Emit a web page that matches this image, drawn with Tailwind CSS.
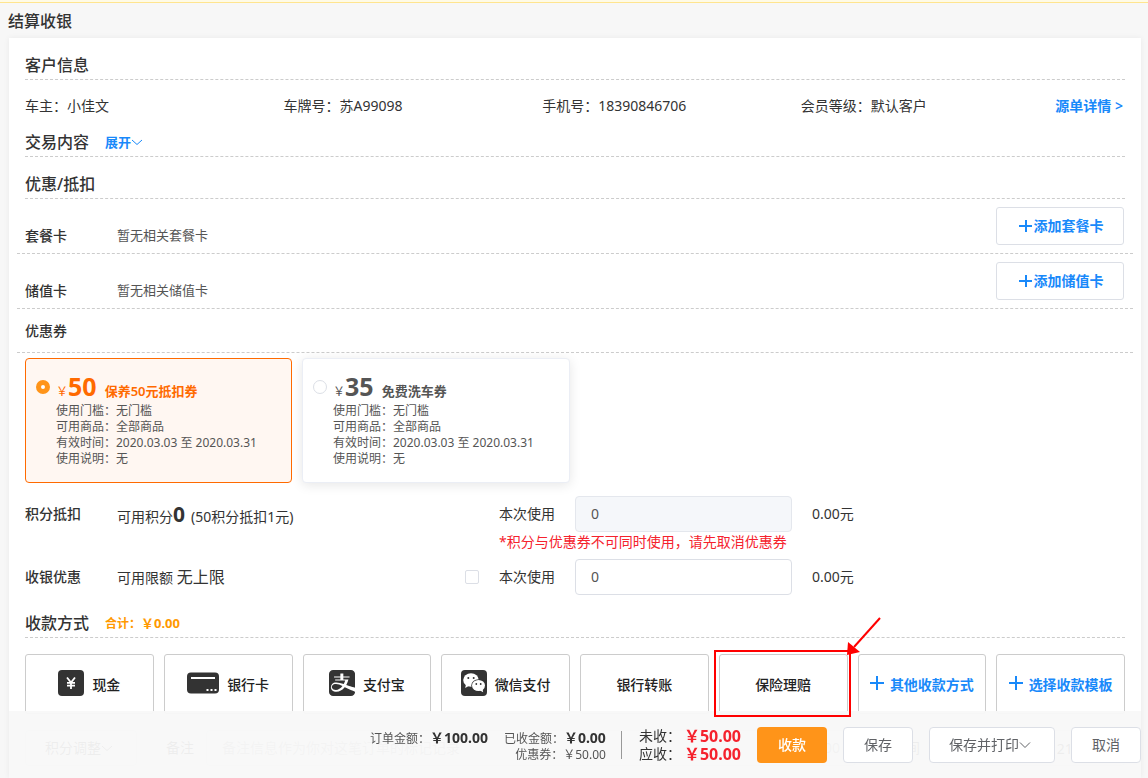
<!DOCTYPE html>
<html lang="zh-CN">
<head>
<meta charset="utf-8">
<meta name="viewport" content="width=device-width, initial-scale=1">
<title>结算收银</title>
<script src="https://cdn.jsdelivr.net/npm/@tailwindcss/browser@4"></script>
</head>
<body class="h-screen overflow-hidden bg-[#f7f7f7] font-['Noto_Sans','Noto_Sans_CJK_SC',sans-serif] text-sm leading-5 text-[#333]">
<div class="h-[3px] border-b border-[#ffe58f] bg-[#fffbe6]"></div>
<h1 class="flex h-[35px] items-center pl-2 text-base font-medium leading-6">结算收银</h1>

<main class="ml-[9px] mr-[7px] bg-white px-4 pb-3 shadow-[0_0_6px_rgba(0,0,0,0.06)]">
  <h2 class="flex h-[42px] items-end border-b border-dashed border-[#ccc] pb-[2px] text-base font-medium leading-6">客户信息</h2>
  <div class="flex h-[50px] items-center pt-px">
    <div class="grid flex-1 grid-cols-4 whitespace-nowrap">
      <div>车主：小佳文</div>
      <div>车牌号：苏A99098</div>
      <div>手机号：18390846706</div>
      <div>会员等级：默认客户</div>
    </div>
    <a href="#" class="-ml-1 mr-0.5 whitespace-nowrap font-semibold text-[#1989fa]">源单详情 &gt;</a>
  </div>

  <div class="flex items-end gap-4 border-b border-dashed border-[#ccc] pb-[2px]">
    <h2 class="text-base font-medium leading-6">交易内容</h2>
    <button class="flex h-6 items-center text-[13px] font-semibold text-[#1989fa]">展开
      <svg class="size-3" viewBox="0 0 12 12" fill="none" stroke="currentColor"><path d="M1 4l5 4.500 5-4.500"/></svg>
    </button>
  </div>

  <h2 class="mt-[15px] border-b border-dashed border-[#ccc] pb-[2px] text-base font-medium leading-6">优惠/抵扣</h2>

  <div class="-mx-2 flex h-[55px] items-start border-b border-dashed border-[#ccc] pl-2 pr-[9px]">
    <h3 class="mt-[27px] w-[92px] font-medium">套餐卡</h3>
    <p class="mt-[26px] flex-1 text-[13px] text-[#555]">暂无相关套餐卡</p>
    <button class="mt-2 flex h-[38px] w-32 items-center justify-center rounded-[3px] border border-[#dcdfe6] bg-white pl-0.5 font-semibold text-[#1989fa]">
      <svg class="mr-0.5 size-[13px]" viewBox="0 0 13 13" fill="none" stroke="currentColor" stroke-width="2"><path d="M0 6h13M7 0v12"/></svg>添加套餐卡
    </button>
  </div>
  <div class="-mx-2 flex h-[55px] items-start border-b border-dashed border-[#ccc] pl-2 pr-[9px]">
    <h3 class="mt-[27px] w-[92px] font-medium">储值卡</h3>
    <p class="mt-[26px] flex-1 text-[13px] text-[#555]">暂无相关储值卡</p>
    <button class="mt-2 flex h-[38px] w-32 items-center justify-center rounded-[3px] border border-[#dcdfe6] bg-white pl-0.5 font-semibold text-[#1989fa]">
      <svg class="mr-0.5 size-[13px]" viewBox="0 0 13 13" fill="none" stroke="currentColor" stroke-width="2"><path d="M0 6h13M7 0v12"/></svg>添加储值卡
    </button>
  </div>
  <div class="-mx-2 flex h-11 items-center border-b border-dashed border-[#ccc] px-2">
    <h3 class="font-medium">优惠券</h3>
  </div>

  <div class="mt-[5px] flex gap-2.5">
    <label class="flex h-[125px] w-[267px] gap-1.5 rounded border border-[#ff6a00] bg-[#fff7f2] pl-2.5 pt-[11px] text-xs leading-4 text-[#555]">
      <input type="radio" name="coupon" checked class="mt-2.5 size-3.5 shrink-0 appearance-none rounded-full border-[5px] border-[#ff9419] bg-white">
      <span class="block">
        <span class="flex h-[33px] items-baseline leading-8 text-[#ff6a00]"><span>￥</span><b class="text-[25px] leading-8">50</b><span class="ml-2 text-[13px] font-semibold">保养50元抵扣券</span></span>
        <span class="block">使用门槛：无门槛</span>
        <span class="block">可用商品：全部商品</span>
        <span class="block">有效时间：2020.03.03 至 2020.03.31</span>
        <span class="block">使用说明：无</span>
      </span>
    </label>
    <label class="flex h-[125px] w-[268px] gap-1.5 rounded border border-[#ebeef5] bg-white pl-2.5 pt-[11px] text-xs leading-4 text-[#555] shadow-[0_2px_12px_rgba(0,0,0,0.1)]">
      <input type="radio" name="coupon" class="mt-2.5 size-3.5 shrink-0 appearance-none rounded-full border border-[#dcdfe6] bg-white">
      <span class="block">
        <span class="flex h-[33px] items-baseline leading-8"><span>￥</span><b class="text-[25px] leading-8">35</b><span class="ml-2 text-[13px] font-semibold">免费洗车券</span></span>
        <span class="block">使用门槛：无门槛</span>
        <span class="block">可用商品：全部商品</span>
        <span class="block">有效时间：2020.03.03 至 2020.03.31</span>
        <span class="block">使用说明：无</span>
      </span>
    </label>
  </div>

  <div class="mt-[13px] flex h-[63px] items-start">
    <h3 class="flex h-9 w-[92px] items-center font-medium">积分抵扣</h3>
    <p class="flex h-9 w-[382px] items-baseline leading-9">可用积分<b class="text-[21px] leading-9">0</b><span class="ml-1.5">(50积分抵扣1元)</span></p>
    <div>
      <div class="flex h-9 items-center">
        <label for="points" class="w-[76px]">本次使用</label>
        <input id="points" value="0" disabled class="h-9 w-[217px] rounded border border-[#e4e7ed] bg-[#f5f7fa] px-[15px] pb-0.5 text-[#555]">
        <span class="ml-5">0.00元</span>
      </div>
      <p class="text-[#f5222d]">*积分与优惠券不可同时使用，请先取消优惠券</p>
    </div>
  </div>

  <div class="flex h-9 items-center">
    <h3 class="w-[92px] font-medium">收银优惠</h3>
    <p class="w-[348px]">可用限额 <span class="text-base leading-5">无上限</span></p>
    <input type="checkbox" aria-label="启用收银优惠" class="mr-5 size-3.5 appearance-none rounded-[2px] border border-[#dcdfe6] bg-white">
    <label for="cash" class="w-[76px]">本次使用</label>
    <input id="cash" value="0" class="h-9 w-[217px] rounded border border-[#dcdfe6] bg-white px-[15px] pb-0.5 text-[#555]">
    <span class="ml-5">0.00元</span>
  </div>

  <div class="mt-4 flex items-end gap-4 border-b border-dashed border-[#ccc] pb-[2px]">
    <h2 class="text-base font-medium leading-6">收款方式</h2>
    <p class="h-6 text-xs font-bold leading-6 text-[#ff9900]">合计：<span class="text-[13px] leading-6">￥0.00</span></p>
  </div>

  <div class="mt-4 grid grid-cols-8 gap-2.5 whitespace-nowrap font-medium text-[#222]">
    <button class="flex h-[60px] items-center justify-center gap-2 rounded-[3px] border border-[#ccc] pt-0.5">
      <svg class="-mt-1 size-[26px]" viewBox="0 0 26 26"><rect width="26" height="26" rx="4" fill="#333"/><path d="M9 7.500l4 5 4-5M9 12.800h8M9 15.600h8M13 12.500V19" fill="none" stroke="#fff" stroke-width="1.800"/></svg>现金
    </button>
    <button class="flex h-[60px] items-center justify-center gap-2 rounded-[3px] border border-[#ccc] pt-0.5">
      <svg class="-mt-1 h-[22px] w-8" viewBox="0 0 32 22"><rect y="0.500" width="32" height="21" rx="4" fill="#333"/><path d="M4 6h24" stroke="#fff" stroke-width="2"/><path d="M19.500 18h2M23.500 18h2M27.500 18h2" stroke="#fff" stroke-width="2"/></svg>银行卡
    </button>
    <button class="flex h-[60px] items-center justify-center gap-2 rounded-[3px] border border-[#ccc] pt-0.5">
      <svg class="-mt-1 size-[26px]" viewBox="0 0 16 16" fill="#333"><path d="M2.541 0H13.500a2.551 2.551 0 0 1 2.540 2.563v8.297c-.006 0-.531-.046-2.978-.813-.412-.14-.916-.327-1.479-.536-.304-.113-.624-.232-.957-.353a12.980 12.980 0 0 0 1.325-3.373H8.822V4.649h3.831v-.634h-3.830V2.121H7.260c-.274 0-.274.273-.274.273v1.621H3.110v.634h3.875v1.136h-3.200v.634H9.990c-.227.789-.532 1.530-.894 2.202-2.013-.67-4.161-1.212-5.510-.878-.864.214-1.420.597-1.746.998-1.499 1.840-.424 4.633 2.741 4.633 1.872 0 3.675-1.053 5.072-2.787 2.080 1.008 6.370 2.738 6.387 2.745v.105A2.551 2.551 0 0 1 13.500 16H2.541A2.552 2.552 0 0 1 0 13.437V2.563A2.552 2.552 0 0 1 2.541 0Z"/><path d="M2.309 9.270c-1.220 1.073-.490 3.034 1.978 3.034 1.434 0 2.868-.925 3.994-2.406-1.602-.789-2.959-1.353-4.425-1.207-.397.040-1.140.217-1.547.580Z"/></svg>支付宝
    </button>
    <button class="flex h-[60px] items-center justify-center gap-2 rounded-[3px] border border-[#ccc] pt-0.5">
      <svg class="-mt-1 size-[26px]" viewBox="0 0 26 26"><rect width="26" height="26" rx="4" fill="#333"/><path d="M5 14l-.8 4 4.300-2.500z" fill="#fff"/><ellipse cx="10" cy="10" rx="7.800" ry="6.700" fill="#fff"/><ellipse cx="17.500" cy="15.500" rx="7.200" ry="6.200" fill="#333"/><ellipse cx="17.500" cy="15.500" rx="6.500" ry="5.500" fill="#fff"/><path d="M19 20.500l3.200 1.800-.7-3.500z" fill="#fff"/><g fill="#333"><circle cx="7.300" cy="8" r="1"/><circle cx="12.700" cy="8" r="1"/><circle cx="15.300" cy="14" r=".9"/><circle cx="19.700" cy="14" r=".9"/></g></svg>微信支付
    </button>
    <button class="h-[60px] rounded-[3px] border border-[#ccc] pt-0.5">银行转账</button>
    <div class="relative">
      <button class="h-[60px] w-full rounded-[3px] border border-[#ccc] pt-0.5">保险理赔</button>
      <div class="pointer-events-none absolute -left-[5px] -right-[3px] -top-1 z-20 h-[67px] border-2 border-[#f00]">
        <svg class="absolute -right-[33px] -top-[35px] h-10 w-9" viewBox="0 0 36 40" fill="#f00"><path d="M34 1L8 30" stroke="#f00" stroke-width="2"/><path d="M2 25L1 38l13-3z"/></svg>
      </div>
    </div>
    <button class="flex h-[60px] items-center justify-center gap-1.5 rounded-[3px] border border-[#ccc] pt-0.5 font-semibold text-[#1989fa]">
      <svg class="-mt-1 size-3.5" viewBox="0 0 14 14" fill="none" stroke="currentColor" stroke-width="2"><path d="M0 7h14M7 0v14"/></svg>其他收款方式
    </button>
    <button class="flex h-[60px] items-center justify-center gap-1.5 rounded-[3px] border border-[#ccc] pt-0.5 font-semibold text-[#1989fa]">
      <svg class="-mt-1 size-3.5" viewBox="0 0 14 14" fill="none" stroke="currentColor" stroke-width="2"><path d="M0 7h14M7 0v14"/></svg>选择收款模板
    </button>
  </div>

  <div class="mt-4 flex h-9 items-center whitespace-nowrap">
    <button class="flex h-9 w-28 items-center justify-center rounded border border-[#dcdfe6] pr-1">积分调整
      <svg class="size-3" viewBox="0 0 12 12" fill="none" stroke="currentColor"><path d="M1 4l5 4.500 5-4.500"/></svg>
    </button>
    <label for="remark" class="ml-[29px] mr-3">备注</label>
    <div class="flex h-9 flex-1 items-center rounded border border-[#dcdfe6] px-[15px]">
      <input id="remark" placeholder="备注信息作为你对这笔订单的标记记录" class="min-w-0 flex-1 placeholder:text-[#999]"><span class="text-[#888]">0/200</span>
    </div>
    <label for="time" class="ml-2 mr-[18px]">收银时间</label>
    <input id="time" value="2020-03-16 21:10" class="h-9 w-[187px] rounded border border-[#dcdfe6] pl-[41px]">
  </div>
</main>

<footer class="fixed bottom-0 left-[9px] right-[7px] z-10 flex h-[67px] items-start justify-end whitespace-nowrap bg-[#f8f8f8]/95 pt-4">
  <div class="flex gap-4 text-xs leading-4 text-[#555]">
    <div class="mt-[3px] flex items-baseline">订单金额：<b class="text-sm leading-4 text-[#333]">￥100.00</b></div>
    <div class="mt-[3px] flex flex-col items-end">
      <div class="flex items-baseline">已收金额：<b class="text-sm leading-4 text-[#333]">￥0.00</b></div>
      <div>优惠券：￥50.00</div>
    </div>
  </div>
  <div class="ml-[15px] mr-[17px] mt-1 h-7 w-px bg-[#999]"></div>
  <div class="mr-4 leading-[18px]">
    <div class="flex h-[18px] items-center gap-[3px]">未收：<b class="text-base leading-[18px] text-[#f5222d]">￥50.00</b></div>
    <div class="flex h-[18px] items-center gap-[3px]">应收：<b class="text-base leading-[18px] text-[#f5222d]">￥50.00</b></div>
  </div>
  <div class="flex gap-4">
    <button class="h-9 w-[70px] rounded bg-[#ff9419] font-medium text-white">收款</button>
    <button class="h-9 w-[70px] rounded border border-[#dcdfe6] bg-white text-[#606266]">保存</button>
    <button class="flex h-9 w-[126px] items-center justify-center rounded border border-[#dcdfe6] bg-white pr-1 text-[#606266]">保存并打印
      <svg class="size-3" viewBox="0 0 12 12" fill="none" stroke="currentColor"><path d="M1 3.500l5 5 5-5"/></svg>
    </button>
    <button class="h-9 w-[70px] rounded border border-[#dcdfe6] bg-white text-[#606266]">取消</button>
  </div>
</footer>
</body>
</html>
